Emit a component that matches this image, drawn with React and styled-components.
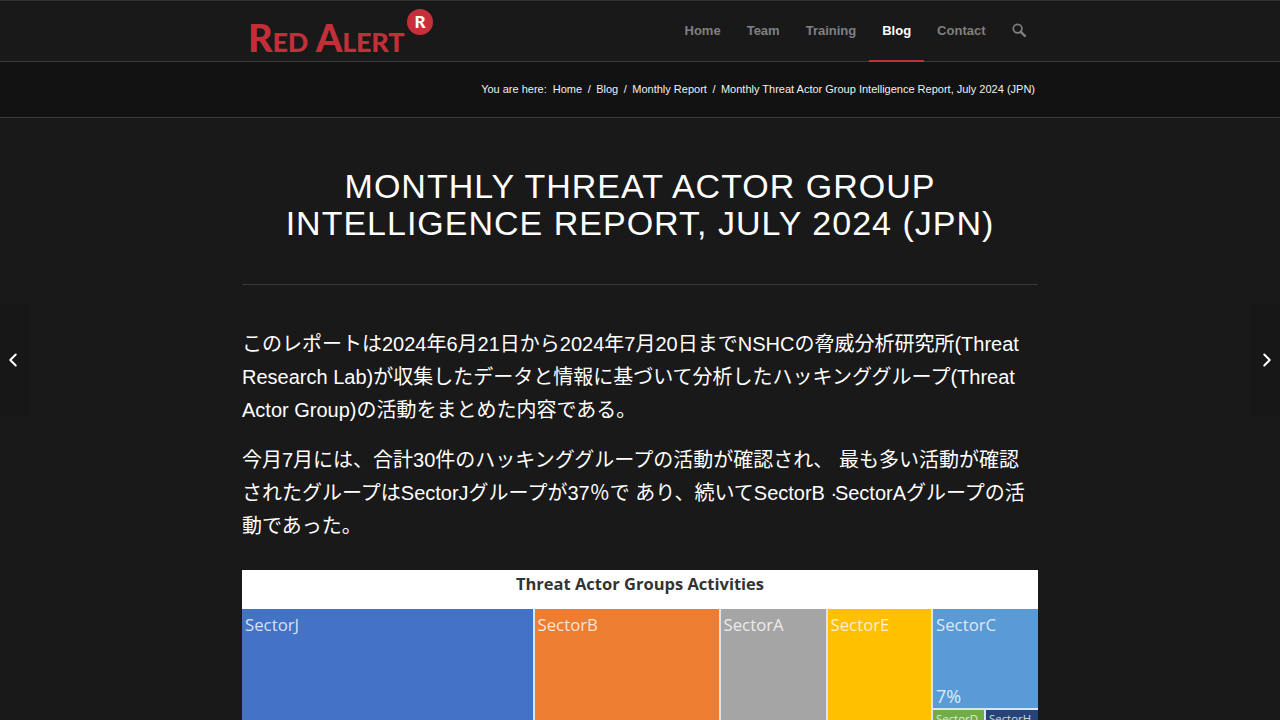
import React from 'react';
import styled, { createGlobalStyle } from 'styled-components';
import { ChevronLeft, ChevronRight } from 'lucide-react';

const GlobalStyle = createGlobalStyle`
  html, body {
    margin: 0;
    padding: 0;
    background: #191919;
  }
  body {
    font-family: "Liberation Sans", "Noto Sans CJK JP", sans-serif;
    color: #fff;
  }
`;

const Page = styled.div`
  position: relative;
  height: 720px;
  overflow: hidden;
  background: #191919;
`;

const Header = styled.header`
  height: 60px;
  border-top: 1px solid #333;
  border-bottom: 1px solid #3a3a3a;
  background: #191919;
`;

const Inner = styled.div`
  width: 796px;
  height: 100%;
  margin: 0 auto;
  display: flex;
  align-items: center;
  justify-content: space-between;
`;

const Logo = styled.a`
  position: relative;
  display: block;
  width: 192px;
  height: 60px;
`;

const LogoText = styled.span`
  position: absolute;
  left: 6px;
  bottom: 4px;
  font-family: "Lato", sans-serif;
  font-size: 38px;
  line-height: 40px;
  font-weight: 900;
  font-variant: small-caps;
  letter-spacing: -0.2px;
  white-space: nowrap;
  color: #c22f39;
`;

const LogoBadge = styled.span`
  position: absolute;
  left: 165px;
  top: 8px;
  width: 26px;
  height: 26px;
  border-radius: 50%;
  background: #c7303b;
  color: #fff;
  font-family: "Lato", sans-serif;
  font-size: 17px;
  font-weight: 900;
  line-height: 26px;
  text-align: center;
`;

const Nav = styled.nav`
  display: flex;
  height: 100%;
  margin-right: -0.5px;
`;

const NavItem = styled.a`
  position: relative;
  display: flex;
  align-items: center;
  box-sizing: border-box;
  padding: 0 13px 2px;
  height: 60px;
  font-size: 13px;
  font-weight: 700;
  color: ${(p) => (p.$active ? '#fff' : '#808080')};

  ${(p) =>
    p.$active &&
    `&::after {
      content: '';
      position: absolute;
      left: 0;
      right: 0;
      bottom: -1px;
      height: 2px;
      background: #c22f39;
    }`}
`;

const SearchIcon = styled.svg`
  width: 14px;
  height: 14px;
  display: block;
`;

const TitleBar = styled.div`
  height: 55px;
  border-bottom: 1px solid #3a3a3a;
  background: #121212;
`;

const Breadcrumb = styled.div`
  width: 796px;
  height: 100%;
  margin: 0 auto;
  padding: 0 3px 2px 0;
  box-sizing: border-box;
  display: flex;
  align-items: center;
  justify-content: flex-end;
  font-size: 11px;
  color: #eee;
  white-space: pre;
`;

const Crumb = styled.a`
  color: #f0f0f0;
`;

const Lead = styled.span`
  margin-right: 6px;
`;

const Sep = styled.span`
  margin: 0 5.5px;
`;

const Main = styled.main`
  width: 796px;
  margin: 0 auto;
`;

const Title = styled.h1`
  margin: 0;
  padding: 50px 0 42px;
  border-bottom: 1px solid #3a3a3a;
  font-size: 34px;
  line-height: 37px;
  font-weight: 400;
  letter-spacing: 1px;
  text-align: center;
  text-transform: uppercase;
  color: #fff;
`;

const Body = styled.div`
  padding-top: 43px;
`;

const Para = styled.p`
  margin: 0 0 17px;
  font-size: 20px;
  line-height: 33px;
  color: #fff;
`;

const Dot = styled.span`
  letter-spacing: -2.3px;
`;

const Chart = styled.figure`
  margin: 27px 0 0;
  background: #fff;
  height: 420px;
`;

const ChartTitle = styled.div`
  height: 39px;
  box-sizing: border-box;
  padding-top: 3px;
  font-family: "Open Sans", sans-serif;
  font-size: 16.5px;
  line-height: 22px;
  font-weight: 700;
  text-align: center;
  color: #333;
`;

const Treemap = styled.div`
  display: grid;
  grid-template-columns: 290.5px 184px 105px 103.5px 1fr;
  gap: 2px;
  height: 381px;
  background: #dbe4f0;
`;

const Cell = styled.div`
  position: relative;
  background: ${(p) => p.$color};
  padding: ${(p) => (p.$small ? '2px 3px' : '5px 3px')};
  font-family: "Open Sans", sans-serif;
  font-size: ${(p) => (p.$small ? '11.4px' : '16.8px')};
  line-height: ${(p) => (p.$small ? '14px' : '22px')};
  color: rgba(255, 255, 255, 0.8);
  overflow: hidden;
`;

const Stack = styled.div`
  display: grid;
  grid-template-rows: 99px 1fr;
  gap: 2px;
`;

const Percent = styled.span`
  position: absolute;
  left: 3px;
  top: 76px;
  font-size: 18px;
`;

const SubRow = styled.div`
  display: grid;
  grid-template-columns: 51px 1fr;
  gap: 2px;
`;

const SideNav = styled.a`
  position: absolute;
  top: 305px;
  ${(p) => (p.$side === 'left' ? 'left: 0;' : 'right: 0;')}
  width: 30px;
  height: 110px;
  display: flex;
  align-items: center;
  justify-content: ${(p) => (p.$side === 'left' ? 'flex-start' : 'flex-end')};
  padding: ${(p) => (p.$side === 'left' ? '0 0 1px 2px' : '0 2px 1px 0')};
  box-sizing: border-box;
  background: #171717;
  color: #fff;
`;

export default function App() {
  return (
    <Page>
      <GlobalStyle />
      <Header>
        <Inner>
          <Logo>
            <LogoText>Red Alert</LogoText>
            <LogoBadge>R</LogoBadge>
          </Logo>
          <Nav>
            <NavItem>Home</NavItem>
            <NavItem>Team</NavItem>
            <NavItem>Training</NavItem>
            <NavItem $active>Blog</NavItem>
            <NavItem>Contact</NavItem>
            <NavItem>
              <SearchIcon viewBox="0 0 14 14" fill="none" stroke="#808080" strokeWidth="1.7">
                <circle cx="5.6" cy="5.6" r="4.3" />
                <path d="M8.8 8.8 12.8 12.8" strokeWidth="2.4" strokeLinecap="round" />
              </SearchIcon>
            </NavItem>
          </Nav>
        </Inner>
      </Header>
      <TitleBar>
        <Breadcrumb>
          <Lead>You are here:</Lead>
          <Crumb>Home</Crumb>
          <Sep>/</Sep>
          <Crumb>Blog</Crumb>
          <Sep>/</Sep>
          <Crumb>Monthly Report</Crumb>
          <Sep>/</Sep>
          <Crumb>Monthly Threat Actor Group Intelligence Report, July 2024 (JPN)</Crumb>
        </Breadcrumb>
      </TitleBar>
      <Main>
        <Title>
          Monthly Threat Actor Group
          <br />
          Intelligence Report, July 2024 (JPN)
        </Title>
        <Body>
          <Para>
            このレポートは2024年6月21日から2024年7月20日までNSHCの脅威分析研究所(Threat Research Lab)が収集したデータと情報に基づいて分析したハッキンググループ(Threat Actor Group)の活動をまとめた内容である。
          </Para>
          <Para>
            今月7月には、合計30件のハッキンググループの活動が確認され、 最も多い活動が確認されたグループはSectorJグループが37％で あり、続いてSectorB <Dot>·</Dot>SectorAグループの活動であった。
          </Para>
          <Chart>
            <ChartTitle>Threat Actor Groups Activities</ChartTitle>
            <Treemap>
              <Cell $color="#4472c4">SectorJ</Cell>
              <Cell $color="#ed7d31">SectorB</Cell>
              <Cell $color="#a5a5a5">SectorA</Cell>
              <Cell $color="#ffc000">SectorE</Cell>
              <Stack>
                <Cell $color="#5b9bd5">
                  SectorC
                  <Percent>7%</Percent>
                </Cell>
                <SubRow>
                  <Cell $color="#70ad47" $small>SectorD</Cell>
                  <Cell $color="#264478" $small>SectorH</Cell>
                </SubRow>
              </Stack>
            </Treemap>
          </Chart>
        </Body>
      </Main>
      <SideNav $side="left">
        <ChevronLeft size={22} strokeWidth={2.2} />
      </SideNav>
      <SideNav $side="right">
        <ChevronRight size={22} strokeWidth={2.2} />
      </SideNav>
    </Page>
  );
}
